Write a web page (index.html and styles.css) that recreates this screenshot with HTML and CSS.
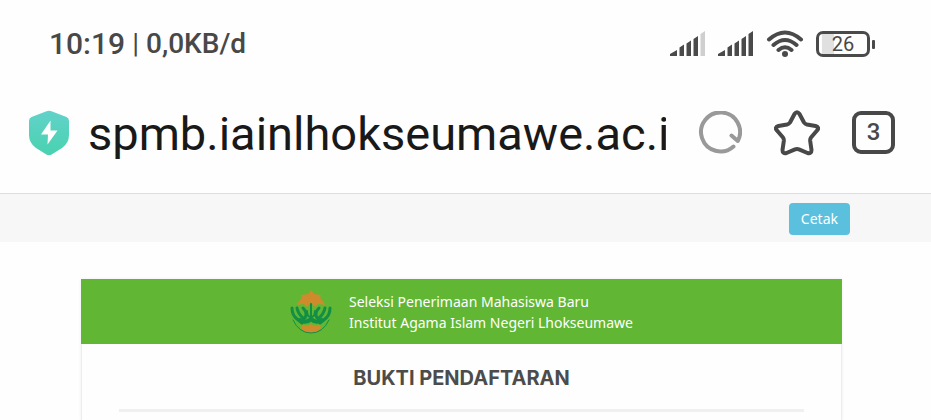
FILE: index.html
```html
<!DOCTYPE html>
<html lang="id">
<head>
<meta charset="utf-8">
<meta name="viewport" content="width=device-width, initial-scale=1">
<title>Bukti Pendaftaran</title>
<link rel="stylesheet" href="styles.css">
</head>
<body>
<div class="status">
  <div class="clock"><span class="time">10:19</span><span class="bar">|</span><span>0,0KB/d</span></div>
  <div class="indicators">
    <svg class="signal" width="36" height="26" viewBox="0 0 36 26" aria-hidden="true">
      <path d="M0 25v-2l7-4v6zM9.500 16.500l4.500-3v11.500h-4.500zM16.500 12.500l4.500-3v15.500h-4.500zM23.500 8l4.500-3v20h-4.500z"/>
      <path class="weak" d="M30.500 3l4.500-3v25h-4.500z"/>
    </svg>
    <svg class="signal" width="36" height="26" viewBox="0 0 36 26" aria-hidden="true">
      <path d="M0 25v-2l7-4v6zM9.500 16.500l4.500-3v11.500h-4.500zM16.500 12.500l4.500-3v15.500h-4.500zM23.500 8l4.500-3v20h-4.500zM30.500 3l4.500-3v25h-4.500z"/>
    </svg>
    <svg class="wifi" width="38" height="28" viewBox="0 0 38 28" aria-hidden="true">
      <path d="M3 9.500Q19-4.500 35 9.500M7.500 15Q19 5 30.500 15M12.500 20Q19 14.500 25.500 20"/>
      <circle cx="19" cy="24" r="3"/>
    </svg>
    <div class="battery"><div class="cell">26</div></div>
  </div>
</div>
<form class="address">
  <svg class="shield" width="42" height="46" viewBox="0 0 42 46" aria-hidden="true">
    <defs><linearGradient id="mint" x1="0" y1="0" x2="0" y2="1"><stop offset="0" stop-color="#62d2ca"/><stop offset="1" stop-color="#49d2b0"/></linearGradient></defs>
    <path fill="url(#mint)" d="M18.500 1.300Q21 0 23.500 1.300L38.500 7Q41 8 41 11V25Q41 33 34 38L24 44.300Q21 46 18 44.300L8 38Q1 33 1 25V11Q1 8 3.500 7Z"/>
    <path fill="#fff" d="M22.500 10.500L13 24.500h7L19.500 34.500 29.500 20.500h-7z"/>
  </svg>
  <input class="url" type="text" aria-label="Alamat situs" value="spmb.iainlhokseumawe.ac.i">
  <button class="tool" type="button" aria-label="Muat ulang">
    <svg width="44" height="44" viewBox="0 0 44 44"><path class="reload" d="M35.500 35.500A19.500 19.500 0 1 1 39.800 30L33.500 24.500"/></svg>
  </button>
  <button class="tool star" type="button" aria-label="Tandai">
    <svg width="46" height="46" viewBox="0 0 46 46"><path d="M20.500 4Q23 .5 25.500 4L30 12.500Q31 14 33 14.500L41.500 16Q46 17.500 43 20.500L37 27.500Q36 29 36.200 31L37.500 40Q37.500 44 33.500 43L25 39.300Q23 38.500 21 39.300L12.500 43Q8.500 44 8.500 40L9.800 31Q10 29 9 27.500L3 20.500Q0 17.500 4.500 16L13 14.500Q15 14 16 12.500Z"/></svg>
  </button>
  <button class="tabs" type="button" aria-label="3 tab terbuka">3</button>
</form>
<div class="actions"><button class="print" type="button">Cetak</button></div>
<main class="page">
  <section class="card">
    <header class="banner">
      <svg width="42" height="44" viewBox="0 0 42 44" aria-hidden="true">
        <g fill="#cf8a2c">
          <path d="M21 0l3 4 7 1-1 3q4 3 5 7-4-1-7-1-3 5-5 1l-2-3-2 3q-2 4-5-1-3 0-7 1 1-4 5-7l-1-3 7-1z"/>
          <path d="M12 34q4 3 9 0 5 3 9 0l1 4q-4 5-10 5t-10-5z"/>
        </g>
        <g fill="none" stroke="#138f45" stroke-linecap="round">
          <path stroke-width="3" d="M2 18q0 7 5 11l5 4M40 18q0 7-5 11l-5 4M7 18q1 6 7 11M35 18q-1 6-7 11M13 18q5 5 2 10M29 18q-5 5-2 10"/>
          <path stroke-width="2" d="M21 14v16M17 21q0 6 4 6t4-6"/>
          <path stroke-width="4" d="M10 30q6 4 11-1 5 5 11 1"/>
          <path stroke-width="1" d="M3 30q6 13 18 13t18-13"/>
        </g>
      </svg>
      <div class="school">Seleksi Penerimaan Mahasiswa Baru<br>Institut Agama Islam Negeri Lhokseumawe</div>
    </header>
    <div class="content">
      <h1>BUKTI PENDAFTARAN</h1>
      <hr>
    </div>
  </section>
</main>
</body>
</html>
```
FILE: styles.css
```css
* { box-sizing: border-box; }
html, body { height: 100%; }
body {
  margin: 0;
  display: flex;
  flex-direction: column;
  overflow: hidden;
  background: #fefefe;
  color: #484848;
  font-family: Roboto, sans-serif;
}
button, input { font: inherit; border: 0; padding: 0; background: none; }
svg { display: block; flex: none; }

.status {
  display: flex;
  justify-content: space-between;
  align-items: center;
  padding: 24px 56px 0 49px;
  height: 64px;
}
.clock { display: flex; gap: 7px; font-size: 28px; line-height: 40px; font-weight: 500; }
.time { font-size: 30px; }
.bar { font-weight: 400; }
.indicators { display: flex; align-items: center; gap: 12px; }
.signal { fill: #4a4a4a; }
.weak { fill: #cfcfcf; }
.wifi { fill: #4a4a4a; }
.wifi path { fill: none; stroke: #4a4a4a; stroke-width: 4; stroke-linecap: round; }
.battery { display: flex; align-items: center; gap: 2px; }
.battery::after { content: ""; width: 3px; height: 9px; border-radius: 1px; background: #4a4a4a; }
.cell {
  width: 54px;
  height: 26px;
  border: 3px solid #4a4a4a;
  border-radius: 7px;
  background: linear-gradient(90deg, #e0e0e0 12px, #fefefe 12px) 3px 0 no-repeat;
  font-size: 20px;
  line-height: 21px;
  text-align: center;
}

.address {
  display: flex;
  align-items: center;
  padding: 8px 36px 0 28px;
  height: 130px;
  border-bottom: 1px solid #dedede;
}
.url {
  flex: 1;
  min-width: 0;
  height: 64px;
  margin: 0 32px 0 18px;
  padding-top: 2px;
  color: #191919;
  font-size: 47px;
  outline: 0;
}
.tool path { fill: none; stroke: #484848; stroke-width: 4; stroke-linecap: round; stroke-linejoin: round; }
.tool .reload { stroke: #999; }
.star { margin: 0 32px; }
.tabs {
  width: 43px;
  height: 43px;
  border: 4px solid #484848;
  border-radius: 9px;
  color: #484848;
  font-size: 24px;
  font-weight: 500;
  line-height: 35px;
}

.actions {
  display: flex;
  justify-content: flex-end;
  align-items: center;
  height: 48px;
  padding: 1px 81px 0;
  background: #f7f7f7;
}
.print {
  padding: 0 12px;
  border-radius: 4px;
  background: #5bc0de;
  color: #fff;
  font: 14px/32px "Noto Sans", sans-serif;
}

.page { flex: 1; display: flex; padding: 37px 89px 0 81px; }
.card { flex: 1; border: solid #ededed; border-width: 0 1px; box-shadow: 0 0 3px #eee; }
.banner {
  display: flex;
  align-items: center;
  justify-content: center;
  gap: 17px;
  height: 65px;
  margin: 0 -1px;
  background: #61b634;
  color: #fff;
}
.school { font: 14px/21px "Noto Sans", sans-serif; }
.content { padding: 20px 37px 0; }
h1 {
  margin: 0 0 17px;
  color: #4c4c4c;
  font: 700 20px/28px Inter, sans-serif;
  text-align: center;
}
hr { margin: 0; border: 0; height: 3px; background: #f0f0f0; }
```
